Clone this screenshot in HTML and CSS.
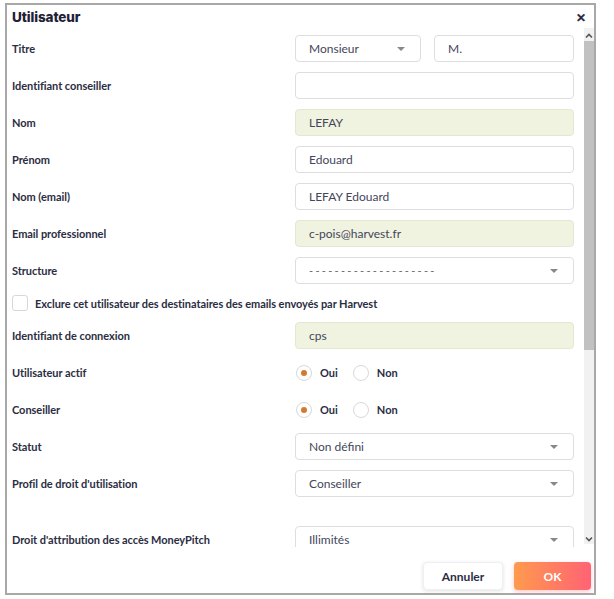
FILE: index.html
```html
<!DOCTYPE html>
<html lang="fr">
<head>
<meta charset="utf-8">
<title>Utilisateur</title>
<link rel="stylesheet" href="styles.css">
</head>
<body>
<div class="dialog">
  <div class="header">
    <div class="title">Utilisateur</div>
    <div class="close">&#x2715;</div>
  </div>
  <div class="main">
    <div class="scroll">
      <div class="row">
        <div class="label">Titre</div>
        <div class="field split">
          <div class="box select sel-small"><span>Monsieur</span><i class="caret"></i></div>
          <div class="box sel-rest"><span>M.</span></div>
        </div>
      </div>
      <div class="row">
        <div class="label">Identifiant conseiller</div>
        <div class="field"><div class="box"></div></div>
      </div>
      <div class="row">
        <div class="label">Nom</div>
        <div class="field"><div class="box ro"><span>LEFAY</span></div></div>
      </div>
      <div class="row">
        <div class="label">Prénom</div>
        <div class="field"><div class="box"><span>Edouard</span></div></div>
      </div>
      <div class="row">
        <div class="label">Nom (email)</div>
        <div class="field"><div class="box"><span>LEFAY Edouard</span></div></div>
      </div>
      <div class="row">
        <div class="label">Email professionnel</div>
        <div class="field"><div class="box ro"><span>c-pois@harvest.fr</span></div></div>
      </div>
      <div class="row">
        <div class="label">Structure</div>
        <div class="field"><div class="box select"><span class="dashes">--------------------</span><i class="caret"></i></div></div>
      </div>
      <div class="row check-row">
        <span class="checkbox"></span>
        <span class="label">Exclure cet utilisateur des destinataires des emails envoyés par Harvest</span>
      </div>
      <div class="row">
        <div class="label">Identifiant de connexion</div>
        <div class="field"><div class="box ro"><span>cps</span></div></div>
      </div>
      <div class="row">
        <div class="label">Utilisateur actif</div>
        <div class="field radios">
          <span class="radio on"></span><span class="rlabel">Oui</span>
          <span class="radio"></span><span class="rlabel">Non</span>
        </div>
      </div>
      <div class="row">
        <div class="label">Conseiller</div>
        <div class="field radios">
          <span class="radio on"></span><span class="rlabel">Oui</span>
          <span class="radio"></span><span class="rlabel">Non</span>
        </div>
      </div>
      <div class="row">
        <div class="label">Statut</div>
        <div class="field"><div class="box select"><span>Non défini</span><i class="caret"></i></div></div>
      </div>
      <div class="row spaced">
        <div class="label">Profil de droit d'utilisation</div>
        <div class="field"><div class="box select"><span>Conseiller</span><i class="caret"></i></div></div>
      </div>
      <div class="row">
        <div class="label">Droit d'attribution des accès MoneyPitch</div>
        <div class="field"><div class="box select"><span>Illimités</span><i class="caret"></i></div></div>
      </div>
    </div>
    <div class="scrollbar">
      <div class="arrow">
        <svg width="8" height="6" viewBox="0 0 8 6"><path d="M1 4.5 L4 1.5 L7 4.5" fill="none" stroke="#555" stroke-width="1.6"/></svg>
      </div>
      <div class="thumb"></div>
      <div class="track"></div>
      <div class="arrow">
        <svg width="8" height="6" viewBox="0 0 8 6"><path d="M1 1.5 L4 4.5 L7 1.5" fill="none" stroke="#555" stroke-width="1.6"/></svg>
      </div>
    </div>
  </div>
  <div class="footer">
    <button class="btn cancel">Annuler</button>
    <button class="btn ok">OK</button>
  </div>
</div>
</body>
</html>
```

FILE: styles.css
```css
* { box-sizing: border-box; }
html, body { margin: 0; padding: 0; background: #fff; }
body {
  font-family: Lato, "Liberation Sans", sans-serif;
  color: #2b2d42;
  padding: 3px 0 0 5px;
}
.dialog {
  width: 591px;
  height: 592px;
  border: 2px solid #a8a8a8;
  display: flex;
  flex-direction: column;
  background: #fff;
}
.header {
  height: 23px;
  display: flex;
  align-items: center;
  justify-content: space-between;
  padding: 0 8px 0 5px;
}
.title {
  font-family: Inter, Lato, sans-serif;
  font-weight: 800;
  font-size: 13.5px;
  color: #1f2136;
  letter-spacing: -0.1px;
  margin-top: 1px;
}
.close {
  font-family: "DejaVu Sans", sans-serif;
  font-weight: 700;
  font-size: 12px;
  color: #1f2136;
  margin-top: 2px;
  -webkit-text-stroke: 0.6px #1f2136;
}
.main {
  height: 519px;
  display: flex;
}
.scroll {
  flex: 1;
  overflow: hidden;
  padding: 7px 10px 0 5px;
  display: flex;
  flex-direction: column;
  gap: 10px;
}
.row {
  display: flex;
  align-items: center;
  height: 27px;
  flex-shrink: 0;
}
.row.spaced { margin-bottom: 19px; }
.label {
  width: 283px;
  font-weight: 700;
  font-size: 11px;
  letter-spacing: -0.05px;
  color: #2b2d42;
}
.field { width: 279px; display: flex; }
.split { gap: 13px; }
.box {
  height: 27px;
  width: 100%;
  border: 1px solid #dedede;
  border-radius: 4px;
  background: #fff;
  display: flex;
  align-items: center;
  justify-content: space-between;
  padding: 0 15px 0 13px;
  font-size: 12px;
  color: #44465a;
}
.box.ro { background: #eff3e0; border-color: #e3e8d2; }
.sel-small { width: 126px; flex-shrink: 0; }
.sel-rest { width: 140px; flex-shrink: 0; }
.caret {
  width: 0; height: 0;
  border-left: 4px solid transparent;
  border-right: 4px solid transparent;
  border-top: 4px solid #888;
}
.dashes { letter-spacing: 2.3px; color: #666; font-size: 11px; }
.check-row { height: 18px; }
.checkbox {
  width: 16px; height: 16px;
  border: 1px solid #d8d8d8;
  border-radius: 3px;
  margin: 0 7px 0 0;
  background: #fff;
}
.check-row .label { width: auto; }
.radios { align-items: center; }
.radio {
  width: 16px; height: 16px;
  border: 1px solid #d8d8d8;
  border-radius: 50%;
  display: flex;
  align-items: center;
  justify-content: center;
  margin-left: 1px;
}
.radio.on::after {
  content: "";
  width: 6px; height: 6px;
  border-radius: 50%;
  background: #d27a32;
}
.rlabel {
  font-weight: 700;
  font-size: 11px;
  margin: 0 14px 0 8px;
  color: #2b2d42;
}
.scrollbar {
  width: 10px;
  height: 516px;
  display: flex;
  flex-direction: column;
  background: #f1f1f1;
}
.arrow {
  height: 13px;
  display: flex;
  align-items: center;
  justify-content: center;
  padding-top: 2px;
}
.thumb { height: 309px; background: #c1c1c1; }
.track { flex: 1; }
.footer {
  flex: 1;
  display: flex;
  justify-content: flex-end;
  align-items: flex-start;
  padding: 15px 3px 0 0;
  gap: 11px;
}
.btn {
  height: 28px;
  border-radius: 4px;
  font-family: Lato, sans-serif;
  font-weight: 700;
  font-size: 12px;
  cursor: pointer;
}
.cancel {
  width: 80px;
  background: #fff;
  border: 1px solid #eef0f4;
  color: #2b2d42;
  box-shadow: 0 1px 4px rgba(0, 0, 0, 0.12);
}
.ok {
  width: 77px;
  border: none;
  color: #fff;
  background: linear-gradient(90deg, #ff9a4e, #ff6374);
  box-shadow: 0 2px 5px rgba(255, 100, 110, 0.35);
}
```
